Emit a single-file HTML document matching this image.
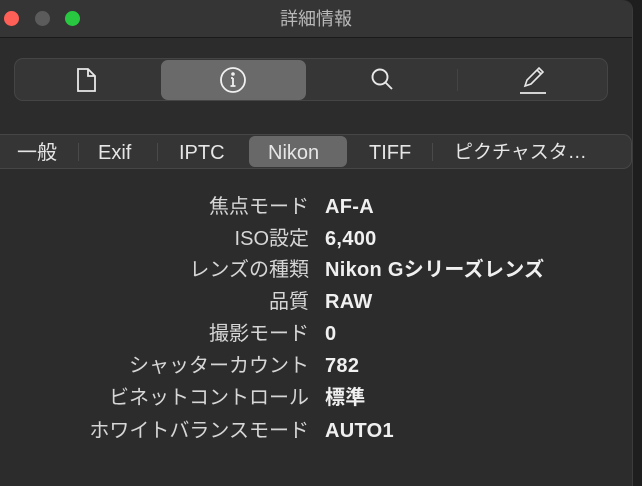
<!DOCTYPE html>
<html><head><meta charset="utf-8"><style>
*{margin:0;padding:0;box-sizing:border-box}
body{width:642px;height:486px;background:#1e1e1e;overflow:hidden;font-family:"Liberation Sans","Noto Sans CJK JP",sans-serif;position:relative}
.win{position:absolute;left:0;top:0;width:633px;height:486px;background:#2c2c2c;border-top-right-radius:10px;border-right:1px solid #3c3c3c}
.title{position:absolute;left:0;top:0;width:632px;height:38px;background:#353535;border-bottom:1px solid #1a1a1a;border-top-right-radius:10px}
.title span{position:absolute;left:0;right:0;top:7px;line-height:24px;text-align:center;color:#b8b8b8;font-size:18px}
.dot{position:absolute;top:11px;width:15px;height:15px;border-radius:50%}
.seg{position:absolute;left:14px;top:58px;width:594px;height:43px;background:#363636;border:1px solid #454545;border-radius:9px}
.sel{position:absolute;left:146px;top:1px;width:145px;height:40px;background:#6a6a6a;border-radius:7px}
.sep{position:absolute;top:10px;width:1px;height:22px;background:#444}
.ic{position:absolute;top:7px}
.tabs{position:absolute;left:-10px;top:134px;width:642px;height:35px;background:#353535;border:1px solid #464646;border-radius:9px}
.tab{position:absolute;top:5px;line-height:26px;height:26px;font-size:20px;color:#e6e6e6;white-space:nowrap}
.tsel{position:absolute;left:258px;top:1px;width:98px;height:31px;background:#686868;border-radius:6px}
.tsep{position:absolute;top:8px;width:1px;height:18px;background:#4a4a4a}
.row{position:absolute;left:0;width:632px;font-size:20px;height:26px;line-height:26px}
.row .l{position:absolute;top:0;right:323px;color:#d6d6d6;white-space:nowrap;line-height:26px}
.row .v{position:absolute;top:0;left:325px;color:#f0f0f0;font-weight:bold;white-space:nowrap;line-height:26px;letter-spacing:0.3px}
</style></head><body>
<div class="win">
<div class="title"><span>詳細情報</span>
<div class="dot" style="left:4px;background:#fe5f57"></div>
<div class="dot" style="left:35px;background:#5b5b5b"></div>
<div class="dot" style="left:65px;background:#28c840"></div>
</div>
<div class="seg">
<div class="sel"></div>
<div class="sep" style="left:442px"></div>
<svg class="ic" style="left:60px" width="24" height="28" viewBox="0 0 24 28" fill="none" stroke="#e8e8e8" stroke-width="1.8"><path d="M3 3h10l7 7v15H3z M13 3v7h7"/></svg>
<svg class="ic" style="left:204px" width="28" height="28" viewBox="0 0 28 28" fill="none" stroke="#f0f0f0" stroke-width="1.8"><circle cx="14" cy="14" r="12"/><path d="M14 12v8M11.5 20h5M12 12h2"/><circle cx="14" cy="8" r="0.9" fill="#f0f0f0"/></svg>
<svg class="ic" style="left:353px" width="28" height="28" viewBox="0 0 28 28" fill="none" stroke="#e8e8e8" stroke-width="1.9"><circle cx="12" cy="11" r="7.5"/><path d="M17.5 16.5l6.5 6.5"/></svg>
<svg class="ic" style="left:502px" width="32" height="30" viewBox="0 0 32 30" fill="none" stroke="#e8e8e8" stroke-width="1.6"><path d="M8 20l2-6 12-12 4 4-12 12z M20 4l4 4"/><path d="M3 27h26" stroke-width="1.8"/></svg>
</div>
<div class="tabs">
<div class="tsel"></div>
<div class="tab" style="left:26px">一般</div>
<div class="tsep" style="left:87px"></div>
<div class="tab" style="left:107px">Exif</div>
<div class="tsep" style="left:166px"></div>
<div class="tab" style="left:188px">IPTC</div>
<div class="tab" style="left:277px">Nikon</div>
<div class="tab" style="left:378px">TIFF</div>
<div class="tsep" style="left:441px"></div>
<div class="tab" style="left:463px;font-size:19px">ピクチャスタ…</div>
</div>
<div class="row" style="top:194px"><span class="l">焦点モード</span><span class="v">AF-A</span></div>
<div class="row" style="top:226px"><span class="l">ISO設定</span><span class="v">6,400</span></div>
<div class="row" style="top:257px"><span class="l">レンズの種類</span><span class="v">Nikon Gシリーズレンズ</span></div>
<div class="row" style="top:289px"><span class="l">品質</span><span class="v">RAW</span></div>
<div class="row" style="top:321px"><span class="l">撮影モード</span><span class="v">0</span></div>
<div class="row" style="top:353px"><span class="l">シャッターカウント</span><span class="v">782</span></div>
<div class="row" style="top:385px"><span class="l">ビネットコントロール</span><span class="v">標準</span></div>
<div class="row" style="top:418px"><span class="l">ホワイトバランスモード</span><span class="v">AUTO1</span></div>
</div>
</body></html>
